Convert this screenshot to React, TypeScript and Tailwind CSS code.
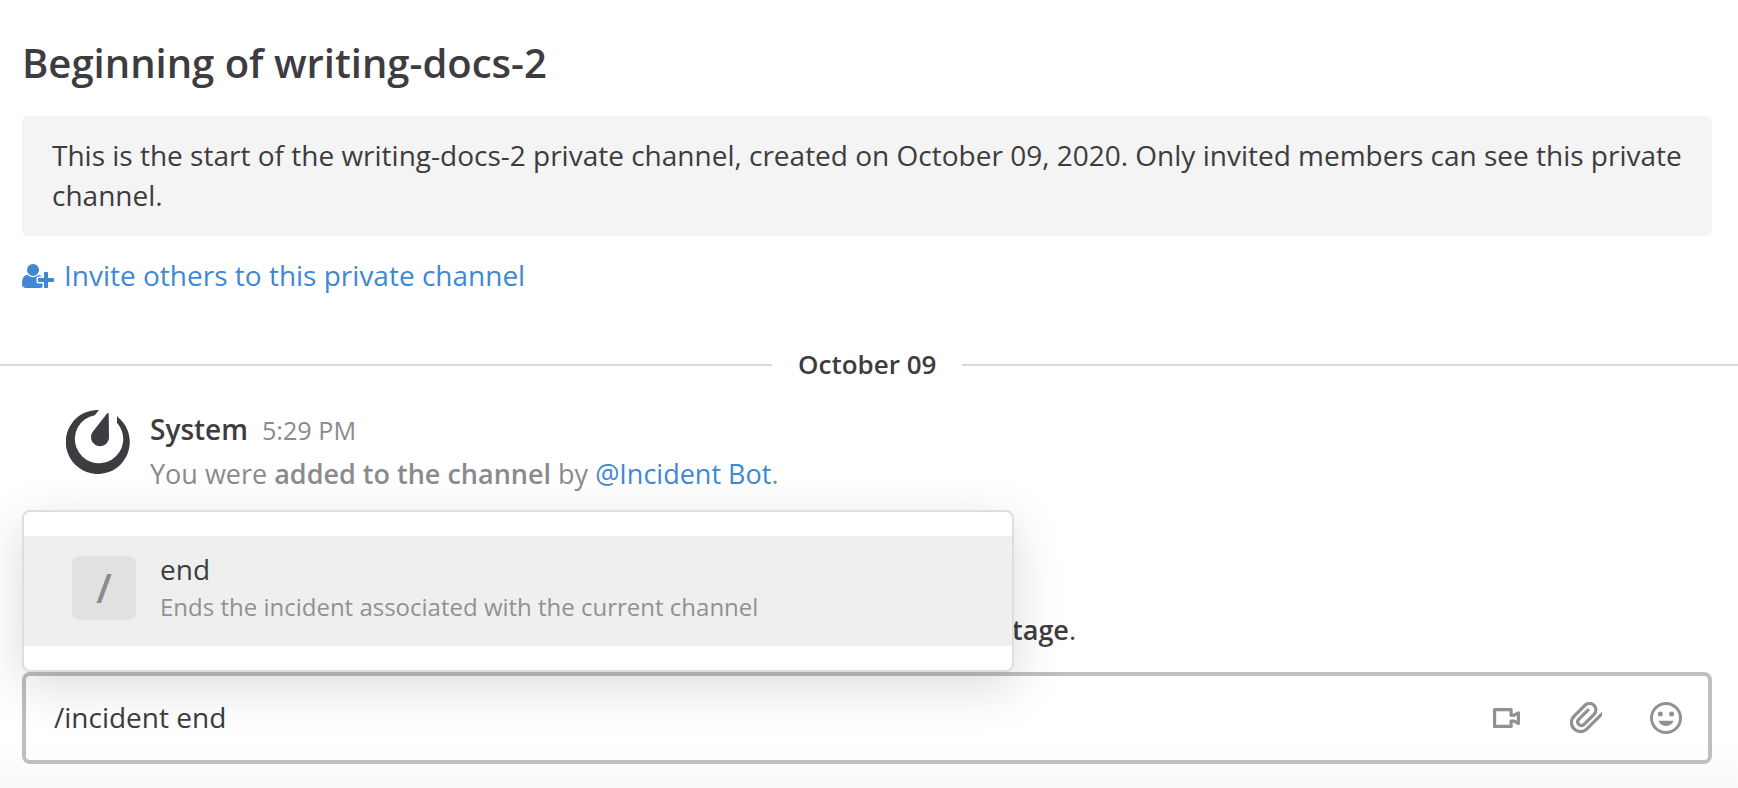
import React from "react";

function UserPlusIcon() {
  return (
    <svg viewBox="0 0 2048 1792" className="mt-0.5 h-7 w-8 shrink-0" fill="currentColor">
      <path d="M704 896q-159 0-271.500-112.500t-112.500-271.500 112.500-271.500 271.500-112.500 271.500 112.500 112.500 271.500-112.500 271.500-271.500 112.500zm960 128h352q13 0 22.500 9.500t9.500 22.500v192q0 13-9.500 22.500t-22.500 9.500h-352v352q0 13-9.500 22.500t-22.500 9.500h-192q-13 0-22.500-9.500t-9.500-22.500v-352h-352q-13 0-22.500-9.500t-9.500-22.500v-192q0-13 9.500-22.500t22.500-9.500h352v-352q0-13 9.500-22.500t22.500-9.500h192q13 0 22.500 9.500t9.500 22.500v352zm-736 224q0 52 38 90t90 38h256v238q-68 50-171 50h-874q-121 0-194-69t-73-190q0-53 3.500-103.500t14-109 26.500-108.500 43-97.500 62-81 85.500-53.500 111.500-20q19 0 39 17 79 61 154.500 91.500t164.500 30.500 164.500-30.500 154.500-91.500q20-17 39-17 132 0 217 96h-223q-52 0-90 38t-38 90v192z" />
    </svg>
  );
}

function MattermostLogo() {
  return (
    <svg viewBox="0 0 64 64" className="size-16 shrink-0" fill="#3d3c40">
      <path d="M32.500 0A32 32 0 1 0 52 7.200L51 5.800V12.800A24.200 24.200 0 1 1 28.800 5.200L32.500 0.500Z" />
      <path d="M41 3.600Q42.600 2 42.700 4.200L43 27A9 9 0 1 1 27 21.500Z" />
    </svg>
  );
}

function VideoIcon() {
  return (
    <svg viewBox="0 0 27 20" className="mr-0.5 h-5 w-[27px]" fill="none" stroke="currentColor" strokeWidth="3.2">
      <path d="M1.600 1.600H18.100V7.200L20.500 7.400L25.400 4.800V15.400L20.500 12.800L18.100 13V18.400H1.600Z" strokeLinejoin="round" />
    </svg>
  );
}

function ClipIcon() {
  return (
    <svg viewBox="0 0 32 32" className="size-8" fill="none" stroke="currentColor" strokeWidth="3.2">
      <path d="M33 10.800L16.900 26.900A9.050 9.050 0 0 1 4.100 14.100L15.050 3.250A6.400 6.400 0 0 1 24.100 12.300L13.700 22.700A3.700 3.700 0 0 1 8.500 17.500L18.900 7.100" />
    </svg>
  );
}

function SmileIcon() {
  return (
    <svg viewBox="0 0 32 32" className="size-8" fill="currentColor">
      <circle cx="16" cy="16" r="14.500" fill="none" stroke="currentColor" strokeWidth="3" />
      <circle cx="10.300" cy="12" r="2.500" />
      <circle cx="21.500" cy="12" r="2.500" />
      <path d="M8.500 18.800h15a7.800 7 0 0 1-15 0z" />
    </svg>
  );
}

export default function App() {
  return (
    <div className="flex h-[788px] w-[1738px] flex-col overflow-hidden bg-white font-['Open_Sans',sans-serif] text-[28px] leading-10 text-[#3d3c40]">
      <header className="flex flex-col px-[22px] pt-[35px] pr-[26px]">
        <h1 className="h-14 text-[40px] leading-14 font-semibold">Beginning of writing-docs-2</h1>
        <p className="mt-[25px] h-[120px] rounded-md bg-[#f4f4f4] px-[30px] pt-[19px]">
          This is the start of the writing-docs-2 private channel, created on October 09, 2020. Only invited members can see this private channel.
        </p>
        <a className="mt-[19px] flex h-10 items-center gap-[10px] text-[#4188d2]">
          <UserPlusIcon />
          <span>Invite others to this private channel</span>
        </a>
      </header>

      <div className="mt-[50px] flex h-10 items-center gap-[26px]">
        <div className="h-0.5 w-[772px] bg-[#d8d8d9]" />
        <span className="pb-0.5 text-[26px] font-semibold">October 09</span>
        <div className="h-0.5 flex-1 bg-[#d8d8d9]" />
      </div>

      <main className="relative mt-[25px] h-[262px] shrink-0">
        <article className="flex gap-5 pl-[66px]">
          <MattermostLogo />
          <div className="-mt-px flex h-[85px] flex-col">
            <div className="flex h-10 items-baseline gap-[14px]">
              <span className="font-semibold">System</span>
              <time className="text-[25.2px] text-[#8b8b8d]">5:29 PM</time>
            </div>
            <p className="mt-[5px] text-[27px] text-[#8b8b8d]">
              You were <b className="font-semibold">added to the channel</b> by <a className="text-[#4188d2]">@Incident Bot</a>.
            </p>
          </div>
        </article>
        <p className="mt-[116px] w-[1076px] text-right text-[27px]">
          <b className="font-semibold">stage</b>.
        </p>
        <section className="absolute top-[100px] left-[22px] z-10 h-[162px] w-[992px] rounded-lg border-2 border-[#dededf] bg-white py-6 shadow-[0_14px_52px_rgba(0,0,0,0.15)]">
          <div className="flex h-[110px] gap-6 bg-[#efefef] pt-5 pl-[48px]">
            <div className="flex size-16 items-center justify-center rounded-lg bg-[#e1e1e1] pb-px text-[40px] font-semibold text-[#8b8b8c]">/</div>
            <div className="-mt-[7px] flex flex-col">
              <span>end</span>
              <span className="text-2xl leading-9 text-[#919192]">Ends the incident associated with the current channel</span>
            </div>
          </div>
        </section>
      </main>

      <footer className="h-[116px] bg-linear-to-b from-white from-60% to-[#f9f9f9] pr-[26px] pl-[22px]">
        <div className="flex h-[92px] items-center justify-between rounded-lg border-4 border-[#bfbfc0] pr-[26px] pl-7">
          <span className="pb-0.5">/incident end</span>
          <div className="flex items-center gap-12 text-[#919192]">
            <VideoIcon />
            <ClipIcon />
            <SmileIcon />
          </div>
        </div>
      </footer>
    </div>
  );
}
